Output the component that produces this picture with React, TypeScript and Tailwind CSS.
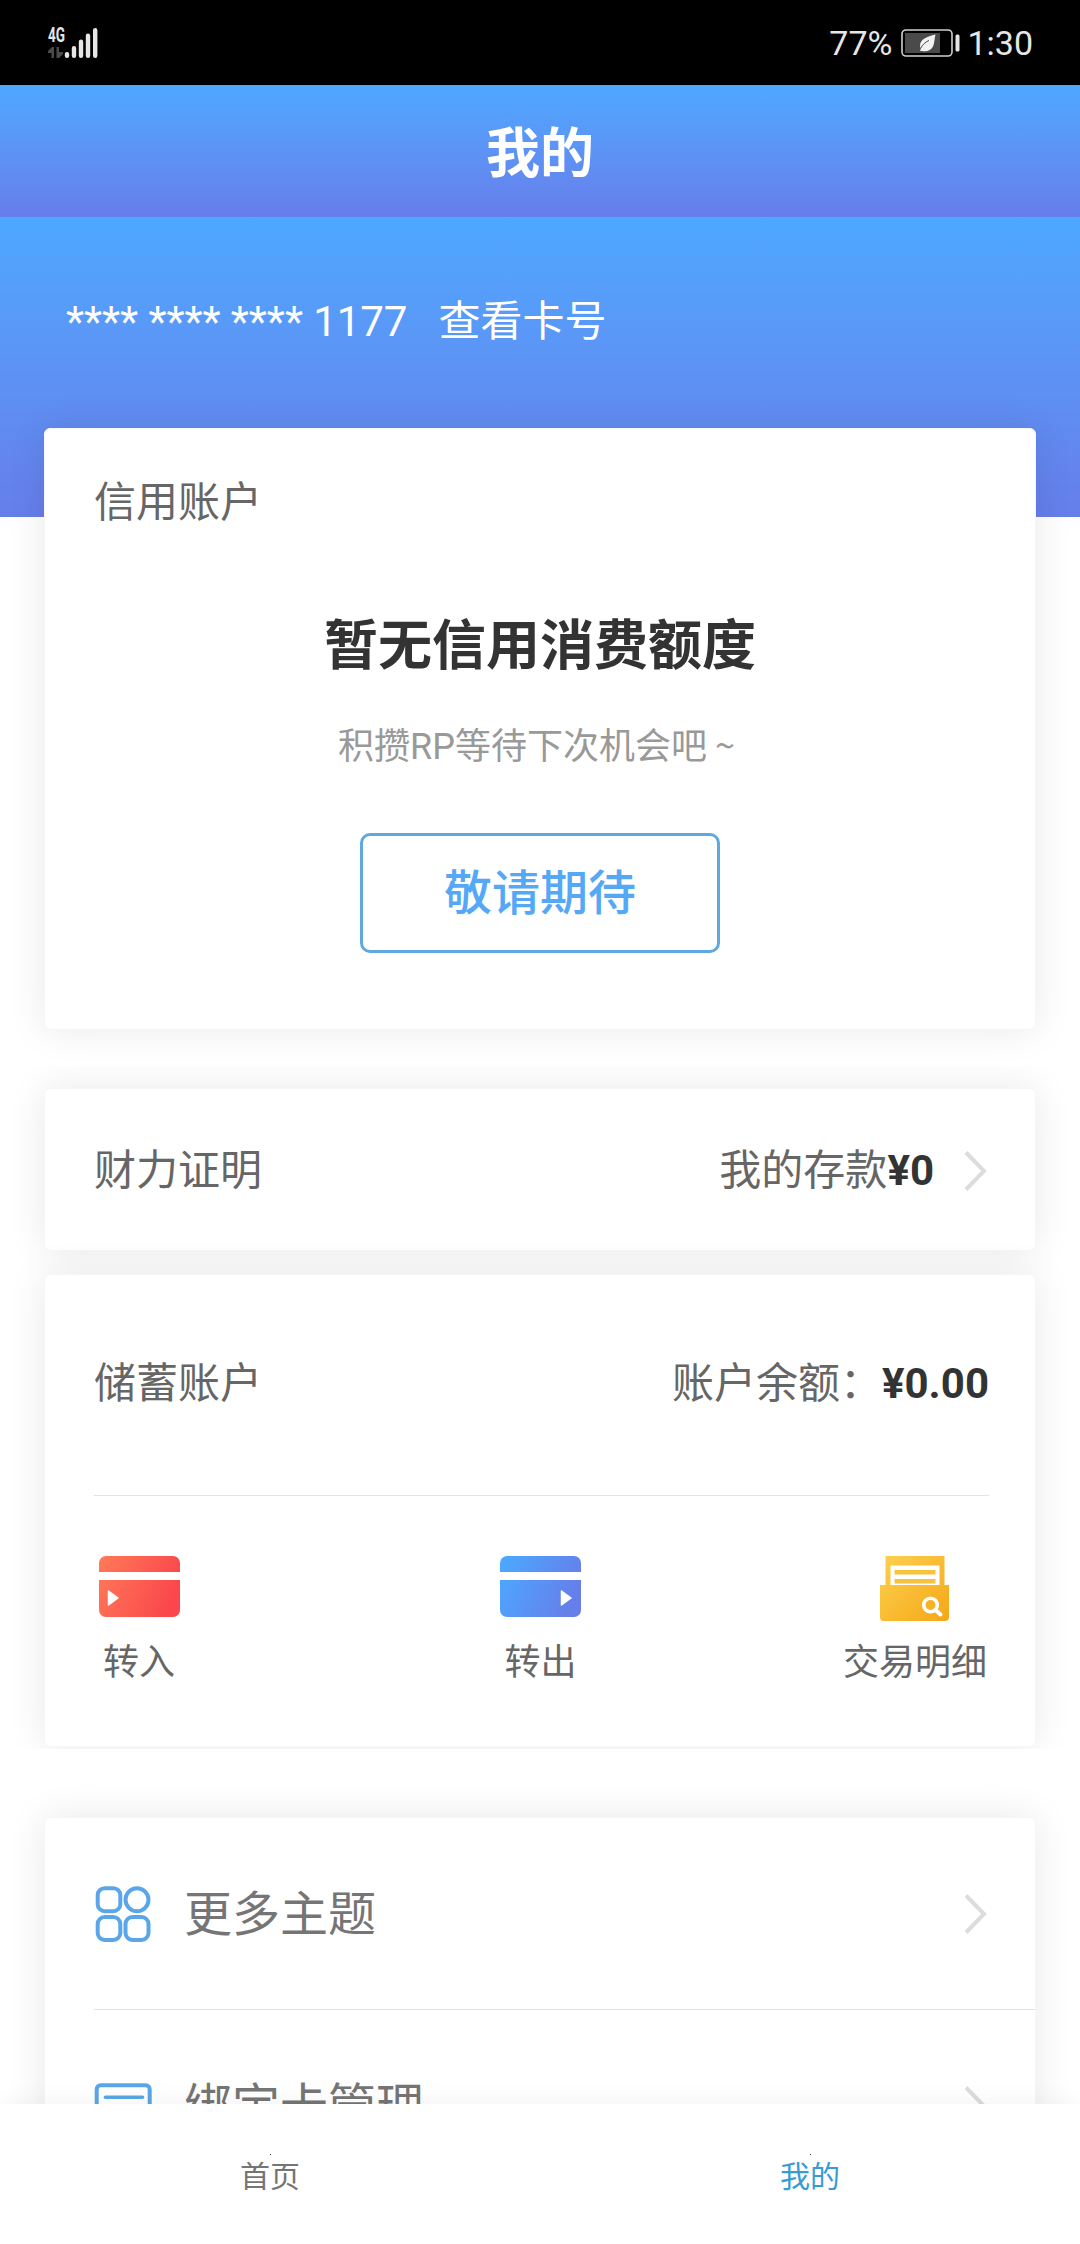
import type { ReactNode } from 'react';
import clsx from 'clsx';

const Chevron = () => (
  <svg width="24" height="42" viewBox="0 0 24 42" fill="none">
    <path d="M3 2.5 21 21 3 39.5" stroke="#dcdcdc" strokeWidth="4" />
  </svg>
);

const StatusBar = () => (
  <div className="flex h-[85px] items-center justify-between bg-black pr-[47px] pl-[47px] text-[34px] text-[#e6e6e6]">
    <svg className="overflow-visible" width="52" height="34" viewBox="0 0 52 34">
      <text x="1" y="15.5" fill="#e6e6e6" fontSize="21" fontWeight="700" textLength="17" lengthAdjust="spacingAndGlyphs">4G</text>
      <path d="M7 21v11H4.5v-5H1v-2l4-4z M9.500 21h2.500v5h4v2l-4 4H9.500z" fill="#4a4a4a" />
      <g stroke="#e6e6e6" strokeWidth="4.400" strokeLinecap="round">
        <path d="M20 28.200v1.600M27 22.200v7.600M34 15.700v14.100M41 9.700v20.100M48.200 4.200v25.600" />
      </g>
    </svg>
    <div className="flex items-center pt-px">
      <span>77%</span>
      <svg className="mr-1.5 ml-[9px]" width="60" height="28" viewBox="0 0 60 28">
        <rect x="1" y="1" width="50" height="26" rx="4" fill="none" stroke="#d0d0d0" strokeWidth="1.600" />
        <rect x="4" y="4" width="35" height="20" fill="#4a4a4a" />
        <rect x="54.500" y="5.500" width="4" height="17" rx="1.500" fill="#e6e6e6" />
        <path d="M34.500 5.500C26 7.500 19 10 19 17c0 1 .3 2 .8 2.800L19 22h2c5 1 9-.5 11-4.500 1.500-3.500 1.500-8 2.500-12z" fill="#f2f2f2" />
        <path d="M19.500 19.500c2-4 5-6.500 8.500-8" stroke="#4a4a4a" fill="none" />
      </svg>
      <span>1:30</span>
    </div>
  </div>
);

const TransferIcon = ({ id, from, to, arrowX }: { id: string; from: string; to: string; arrowX: number }) => (
  <svg width="90" height="72" viewBox="0 0 90 72">
    <defs>
      <linearGradient id={id} gradientUnits="userSpaceOnUse" x1="8" y1="8" x2="84" y2="40">
        <stop offset="0" stopColor={from} />
        <stop offset="1" stopColor={to} />
      </linearGradient>
    </defs>
    <path d="M5 22v-9a7 7 0 0 1 7-7h67a7 7 0 0 1 7 7v9z" fill={`url(#${id})`} />
    <path d="M5 30h81v30a7 7 0 0 1-7 7H12a7 7 0 0 1-7-7z" fill={`url(#${id})`} />
    <path d={`M${arrowX + 0.5} 41v14l9.500-7z`} fill="#fff" stroke="#fff" strokeWidth="1.500" strokeLinejoin="round" />
  </svg>
);

const DetailIcon = () => (
  <svg width="90" height="72" viewBox="0 0 90 72">
    <defs>
      <linearGradient id="detail" gradientUnits="userSpaceOnUse" x1="12" y1="6" x2="78" y2="72">
        <stop offset="0" stopColor="#fdd050" />
        <stop offset="1" stopColor="#f5a716" />
      </linearGradient>
    </defs>
    <path d="M15.500 6h59v29H79v32a4 4 0 0 1-4 4H14a4 4 0 0 1-4-4V35h5.500z" fill="url(#detail)" />
    <path d="M20.500 15.500h49V35h-49z" fill="#fff" />
    <path d="M24.500 20h41v4.500h-41zM24.500 29h41v4.500h-41z" fill="#f9c23c" />
    <circle cx="60.500" cy="55" r="6.800" fill="none" stroke="#fff" strokeWidth="3.600" />
    <path d="m65.500 60 5 4.500" stroke="#fff" strokeWidth="4" strokeLinecap="round" />
  </svg>
);

const ThemeIcon = () => (
  <svg width="58" height="58" viewBox="0 0 58 58" fill="none" stroke="#5aa6e8" strokeWidth="4">
    <rect x="3.700" y="3.200" width="22.600" height="23" rx="7" />
    <circle cx="43" cy="14.700" r="11.500" />
    <rect x="3.700" y="32" width="22.600" height="23" rx="7" />
    <rect x="31.500" y="32" width="23" height="23" rx="7" />
  </svg>
);

const CardIcon = () => (
  <svg width="58" height="58" viewBox="0 0 58 58" fill="none" stroke="#5aa6e8" strokeWidth="4">
    <rect x="2.700" y="8.200" width="53" height="42" rx="4" />
    <path d="M11.500 20.200h37" strokeWidth="3.600" strokeLinecap="round" />
  </svg>
);

const Card = ({ className, children }: { className?: string; children: ReactNode }) => (
  <div className={clsx('mx-11 rounded-[6px] border border-[#f6f6f6] bg-white pl-[49px] shadow-[0_0_38px_rgba(0,0,0,0.09)]', className)}>
    {children}
  </div>
);

const Action = ({ icon, label, className }: { icon: ReactNode; label: string; className: string }) => (
  <div className={clsx('flex', className)}>
    <div className="flex flex-col items-center gap-[14px]">
      {icon}
      <span className="text-4xl leading-[54px]">{label}</span>
    </div>
  </div>
);

const MenuRow = ({ icon, label }: { icon: ReactNode; label: string }) => (
  <div className="flex h-48 items-center border-b border-[#e2e2e2] pr-12 text-5xl text-[#757575]">
    {icon}
    <span className="ml-8 flex-1 pt-0.5">{label}</span>
    <Chevron />
  </div>
);

const TabBar = () => (
  <nav className="z-10 grid h-[140px] shrink-0 grid-cols-2 bg-white pt-[50px] text-center text-[30px] leading-[42px] text-[#757575] shadow-[0_0_24px_rgba(0,0,0,0.06)]">
    <div className="flex flex-col items-center">
      <i className="mb-px size-px bg-[#444]" />
      <span>首页</span>
    </div>
    <div className="flex flex-col items-center">
      <i className="mb-px size-px bg-[#444]" />
      <span className="text-[#3a9bd2]">我的</span>
    </div>
  </nav>
);

export default function App() {
  return (
    <div className="flex h-[2244px] w-[1080px] flex-col overflow-hidden bg-white font-['Roboto','Noto_Sans_CJK_SC',sans-serif] text-[#666]">
      <StatusBar />
      <header className="flex h-[132px] shrink-0 items-center justify-center bg-linear-to-b from-[#4da8ff] to-[#667eea] pt-[7px] text-[54px] font-bold text-white">
        我的
      </header>

      <main className="flex min-h-0 flex-1 flex-col overflow-hidden">
        <div className="h-[300px] shrink-0 bg-linear-to-b from-[#4da8ff] to-[#667eea] px-[66px] pt-[74px] text-[42px] leading-[62px] text-white">
          <span className="tracking-[-0.07px]">**** **** **** 1177</span>
          <span className="ml-[31px]">查看卡号</span>
        </div>

        <Card className="-mt-[89px] flex h-[602px] shrink-0 flex-col items-center pt-[43px] pr-[49px]">
          <div className="self-start text-[42px] leading-[62px]">信用账户</div>
          <div className="mt-[73px] text-[54px] leading-[80px] font-bold text-[#333]">暂无信用消费额度</div>
          <div className="mt-[33px] h-[54px] pr-[7px] text-4xl leading-[54px] text-[#999]">
            积攒RP等待下次机会吧<span className="font-['Noto_Sans_CJK_SC',sans-serif] leading-none"> ~</span>
          </div>
          <button className="mt-[59px] h-[120px] w-[360px] rounded-[10px] border-3 border-[#5fa8e2] pt-0.5 text-5xl font-medium text-[#54a8f5]">
            敬请期待
          </button>
        </Card>

        <section className="mt-9 shrink-0 overflow-hidden pt-[22px] pb-0.5">
          <Card className="flex h-[163px] items-center pt-0.5 pr-12 text-[42px]">
            <span className="flex-1">财力证明</span>
            <span>我的存款</span>
            <b className="mr-[29px] text-[#333]">¥0</b>
            <Chevron />
          </Card>
          <Card className="mt-[23px] h-[473px] pr-[46px]">
            <div className="flex h-[221px] items-center border-b border-[#e2e2e2] pb-1 text-[42px]">
              <span className="flex-1">储蓄账户</span>
              <span>账户余额：</span>
              <b className="text-[#333]">¥0.00</b>
            </div>
            <div className="grid grid-cols-3 pt-[54px] pr-0.5">
              <Action className="justify-start" label="转入" icon={<TransferIcon id="in" from="#ff7857" to="#fa464c" arrowX={14} />} />
              <Action className="justify-center" label="转出" icon={<TransferIcon id="out" from="#4da8ff" to="#667eea" arrowX={66} />} />
              <Action className="justify-end" label="交易明细" icon={<DetailIcon />} />
            </div>
          </Card>
        </section>

        <Card className="mt-[68px] shrink-0">
          <MenuRow icon={<ThemeIcon />} label="更多主题" />
          <MenuRow icon={<CardIcon />} label="绑定卡管理" />
        </Card>
      </main>

      <TabBar />
    </div>
  );
}
